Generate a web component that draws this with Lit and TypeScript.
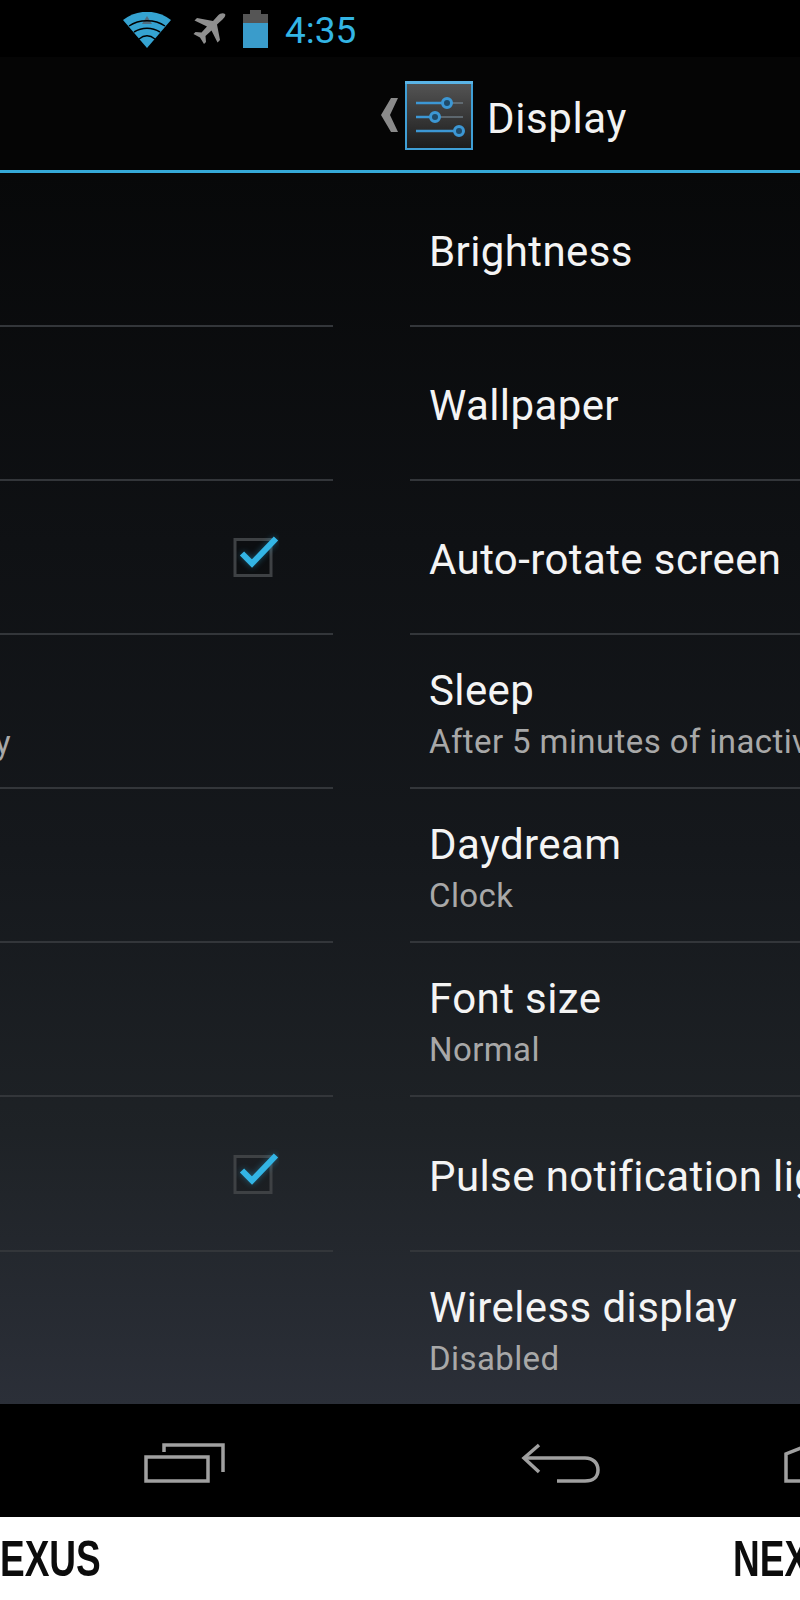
import { LitElement, html, svg, css, nothing } from "lit";
import { customElement } from "lit/decorators.js";

// filas de ajustes: cada una tiene la parte derecha y, a veces, un resto de la columna izquierda
type Row = { title: string; sub?: string; leftSub?: string; checked?: boolean };

const rows: Row[] = [
  { title: "Brightness" },
  { title: "Wallpaper" },
  { title: "Auto-rotate screen", checked: true },
  { title: "Sleep", sub: "After 5 minutes of inactivity", leftSub: "y" },
  { title: "Daydream", sub: "Clock" },
  { title: "Font size", sub: "Normal" },
  { title: "Pulse notification light", checked: true },
  { title: "Wireless display", sub: "Disabled" },
];

@customElement("app-root")
export class AppRoot extends LitElement {
  static styles = css`
    :host {
      display: block;
      width: 800px;
      height: 1600px;
      overflow: hidden;
      background: #fff;
      font-family: Roboto, "Liberation Sans", sans-serif;
    }

    .status {
      height: 57px;
      background: #000;
      display: flex;
      align-items: center;
      padding-left: 123px;
      box-sizing: border-box;
    }
    .status svg { flex: none; }
    .wifi { margin-top: 2px; }
    .plane { margin-left: 22px; }
    .battery { margin-left: 17px; }
    .time {
      margin-left: 17px;
      color: #33b5e5;
      font-size: 37px;
      line-height: 57px;
      margin-top: 4px;
    }

    .bar {
      height: 116px;
      padding: 3px 0 0 381px;
      background: #050505;
      border-bottom: 3px solid #35a9d8;
      box-sizing: border-box;
      display: flex;
      align-items: center;
    }
    .chevron { margin-right: 7px; flex: none; }
    .bar-icon { margin-right: 14px; flex: none; }
    .bar-title {
      color: #f2f2f2;
      font-size: 42px;
      letter-spacing: 0.6px;
      margin-top: 7px;
    }

    .list {
      height: 1231px;
      background: linear-gradient(#070809 0%, #0f1114 30%, #15181c 55%, #1e2226 78%, #2b2f38 100%);
      display: grid;
      grid-template-rows: 154px repeat(6, 154.1px) 1fr;
    }
    .row {
      display: grid;
      grid-template-columns: 333px 390px;
      column-gap: 77px;
      min-height: 0;
    }
    .cell {
      display: flex;
      flex-direction: column;
      justify-content: center;
      border-bottom: 2px solid #33363a;
      overflow: hidden;
      white-space: nowrap;
      box-sizing: border-box;
    }
    .row:last-child .cell { border-bottom: none; }
    .cell.right { padding: 6px 0 0 19px; }
    .cell.left { align-items: flex-end; padding: 0 54px 6px 0; }
    .cell.left .sub {
      align-self: flex-start;
      margin: 70px 0 0 -5px;
    }
    .title {
      color: #f4f4f4;
      font-size: 42px;
      letter-spacing: 0.4px;
      line-height: 48px;
    }
    .sub {
      color: #a8a8a8;
      font-size: 33px;
      letter-spacing: 0.4px;
      line-height: 38px;
      margin-top: 8px;
    }
    .tick { filter: drop-shadow(0 0 3px rgba(51, 181, 229, 0.4)); }

    .nav {
      height: 113px;
      background: #000;
      display: flex;
      align-items: flex-start;
      padding: 39px 0 0 144px;
      box-sizing: border-box;
      overflow: hidden;
    }
    .nav svg { flex: none; }
    .back { margin-left: 296px; }
    .home { margin-left: 183px; }

    .labels {
      height: 83px;
      background: #fff;
      display: flex;
      overflow: hidden;
      white-space: nowrap;
      font-family: "Liberation Sans", sans-serif;
      font-weight: 700;
      font-size: 50px;
      line-height: 50px;
      color: #0c0c0c;
      padding-top: 17px;
      box-sizing: border-box;
    }
    /* no hay fuente condensada instalada: se estrecha la Liberation */
    .labels span {
      flex: none;
      transform: scaleX(0.74);
      transform-origin: left;
    }
    .labels span:first-child { width: 733px; }
  `;

  private wifi() {
    return html`
      <svg class="wifi" width="48" height="36" viewBox="0 0 48 36">
        <path fill="#35a3d1" d="M0 8C14 -3 34 -3 48 8L24 36Z" />
        <path fill="#4f6d80" d="M24 4L29 12H19Z" />
        <path fill="none" stroke="#000" stroke-width="1.5" d="M6 14C16 7 32 7 42 14" />
        <path fill="none" stroke="#000" stroke-width="1.5" d="M11 20C19 15 29 15 37 20" />
        <path fill="none" stroke="#000" stroke-width="1.5" d="M16 27C21 23 27 23 32 27" />
      </svg>
    `;
  }

  private plane() {
    return html`
      <svg class="plane" width="33" height="31" viewBox="0 0 33 31">
        <path
          fill="#8f8f8f"
          d="M32 1C30 -.5 27 .5 25 2.5L20 8 4 5 1.5 7.5 14 13.5 8.5 19.500 2.5 19 .5 21 7 24.500 11 31 13 29 12.500 23 18.500 17.500 24.500 29.500 27 27 24 11.500 29.500 6.500C31.500 4.500 33 2.500 32 1Z"
        />
      </svg>
    `;
  }

  private battery() {
    return html`
      <svg class="battery" width="25" height="38" viewBox="0 0 25 38">
        <rect x="7" y="0" width="11" height="4" fill="#555" />
        <rect x="0" y="4" width="25" height="9" fill="#555" />
        <rect x="0" y="13" width="25" height="25" fill="#3a9ccb" />
      </svg>
    `;
  }

  private settingsIcon() {
    const sliders = [
      { y: 22, knob: 42 },
      { y: 36, knob: 30 },
      { y: 50, knob: 54 },
    ];
    return html`
      <svg class="bar-icon" width="68" height="69" viewBox="0 0 68 69">
        <defs>
          <linearGradient id="tile" x1="0" y1="0" x2="0" y2="1">
            <stop offset="0" stop-color="#555" />
            <stop offset="1" stop-color="#1c1c1c" />
          </linearGradient>
        </defs>
        <rect x="1" y="1" width="66" height="67" fill="url(#tile)" stroke="#3f9fd6" stroke-width="2" />
        <rect x="0" y="0" width="68" height="3" fill="#5ab4e6" />
        ${sliders.map(
          (s) => svg`
            <line x1="11" x2="58" y1=${s.y} y2=${s.y} stroke="#6a7780" stroke-width="1.5" />
            <line x1="11" x2=${s.knob} y1=${s.y} y2=${s.y} stroke="#3c97d4" stroke-width="2.5" />
            <circle cx=${s.knob} cy=${s.y} r="4.5" fill="#1f4a68" stroke="#3c97d4" stroke-width="3" />
          `
        )}
      </svg>
    `;
  }

  private checkbox() {
    return html`
      <svg width="52" height="48" viewBox="0 0 52 48">
        <rect x="8" y="9.5" width="36" height="36" fill="rgba(0,0,0,0.15)" stroke="#3e4144" stroke-width="3" />
        <path class="tick" d="M15 23.5L25 33.5 49 8.5" fill="none" stroke="#33b5e5" stroke-width="6" />
      </svg>
    `;
  }

  private renderRow(row: Row) {
    return html`
      <div class="row">
        <div class="cell left">
          ${row.checked ? this.checkbox() : nothing}
          ${row.leftSub ? html`<div class="sub">${row.leftSub}</div>` : nothing}
        </div>
        <div class="cell right">
          <div class="title">${row.title}</div>
          ${row.sub ? html`<div class="sub">${row.sub}</div>` : nothing}
        </div>
      </div>
    `;
  }

  render() {
    return html`
      <div class="status">
        ${this.wifi()} ${this.plane()} ${this.battery()}
        <span class="time">4:35</span>
      </div>

      <div class="bar">
        <svg class="chevron" width="17" height="34" viewBox="0 0 17 34">
          <path fill="#8a8a8a" d="M10 0H17L9 17 17 34H10L0 17Z" />
        </svg>
        ${this.settingsIcon()}
        <span class="bar-title">Display</span>
      </div>

      <div class="list">${rows.map((r) => this.renderRow(r))}</div>

      <div class="nav">
        <svg width="81" height="40" viewBox="0 0 81 40">
          <path fill="none" stroke="#a0a0a0" stroke-width="3.5" d="M2 14H64V38H2Z" />
          <path fill="none" stroke="#a0a0a0" stroke-width="3.5" d="M20 9V2H79V29" />
        </svg>
        <svg class="back" width="79" height="40" viewBox="0 0 79 40">
          <path fill="none" stroke="#a0a0a0" stroke-width="3.5" d="M18 2L3 15 18 29" />
          <path fill="none" stroke="#a0a0a0" stroke-width="3.5" d="M3 15H64C72 15 77 20 77 27 77 34 72 38 64 38H36" />
        </svg>
        <svg class="home" width="17" height="40" viewBox="0 0 17 40">
          <path fill="none" stroke="#a0a0a0" stroke-width="3.5" d="M17 38H3V11L18 5" />
        </svg>
      </div>

      <div class="labels">
        <span>EXUS</span>
        <span>NEXUS</span>
      </div>
    `;
  }
}
